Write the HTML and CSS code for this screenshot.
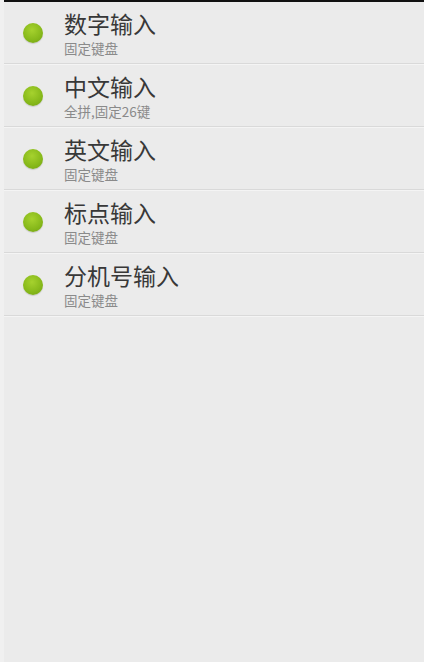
FILE: index.html
```html
<!DOCTYPE html>
<html lang="zh">
<head>
    <meta charset="UTF-8">
    <meta name="viewport" content="width=device-width, initial-scale=1.0">
    <title>输入方式</title>
    <link rel="stylesheet" href="styles.css">
</head>
<body>
    <div class="edge"></div>
    <div class="main">
        <div class="topbar"></div>
        <ul class="list">
            <li class="item">
                <span class="dot"></span>
                <div class="text">
                    <div class="title">数字输入</div>
                    <div class="sub">固定键盘</div>
                </div>
            </li>
            <li class="item">
                <span class="dot"></span>
                <div class="text">
                    <div class="title">中文输入</div>
                    <div class="sub">全拼,固定26键</div>
                </div>
            </li>
            <li class="item">
                <span class="dot"></span>
                <div class="text">
                    <div class="title">英文输入</div>
                    <div class="sub">固定键盘</div>
                </div>
            </li>
            <li class="item">
                <span class="dot"></span>
                <div class="text">
                    <div class="title">标点输入</div>
                    <div class="sub">固定键盘</div>
                </div>
            </li>
            <li class="item">
                <span class="dot"></span>
                <div class="text">
                    <div class="title">分机号输入</div>
                    <div class="sub">固定键盘</div>
                </div>
            </li>
        </ul>
    </div>
</body>
</html>
```

FILE: styles.css
```css
html, body {
    height: 100%;
}
body {
    margin: 0;
    display: flex;
    background-color: #ebebeb;
    font-family: "Noto Sans CJK SC", "Noto Sans", sans-serif;
}
.edge {
    width: 4px;
    background-color: #f0f0f0;
}
.main {
    flex: 1;
}
.topbar {
    height: 2px;
    background-color: #111;
}
.list {
    list-style: none;
    margin: 0;
    padding: 0;
}
.item {
    display: flex;
    align-items: center;
    height: 61px;
    border-bottom: 1px solid #d9d9d9;
    box-shadow: 0 1px 0 #f4f4f4;
    margin-bottom: 1px;
    padding-left: 19px;
}
.dot {
    width: 20px;
    height: 20px;
    border-radius: 50%;
    background: radial-gradient(circle at 45% 35%, #a6d22e, #86b81a 60%, #6f9e12);
    box-shadow: 0 1px 1px rgba(0, 0, 0, 0.15);
    margin-right: 21px;
    flex-shrink: 0;
}
.text {
    display: flex;
    flex-direction: column;
    gap: 4px;
}
.title {
    font-size: 23px;
    line-height: 26px;
    color: #383838;
}
.sub {
    font-size: 13.5px;
    line-height: 16px;
    color: #8a8a8a;
}
```
